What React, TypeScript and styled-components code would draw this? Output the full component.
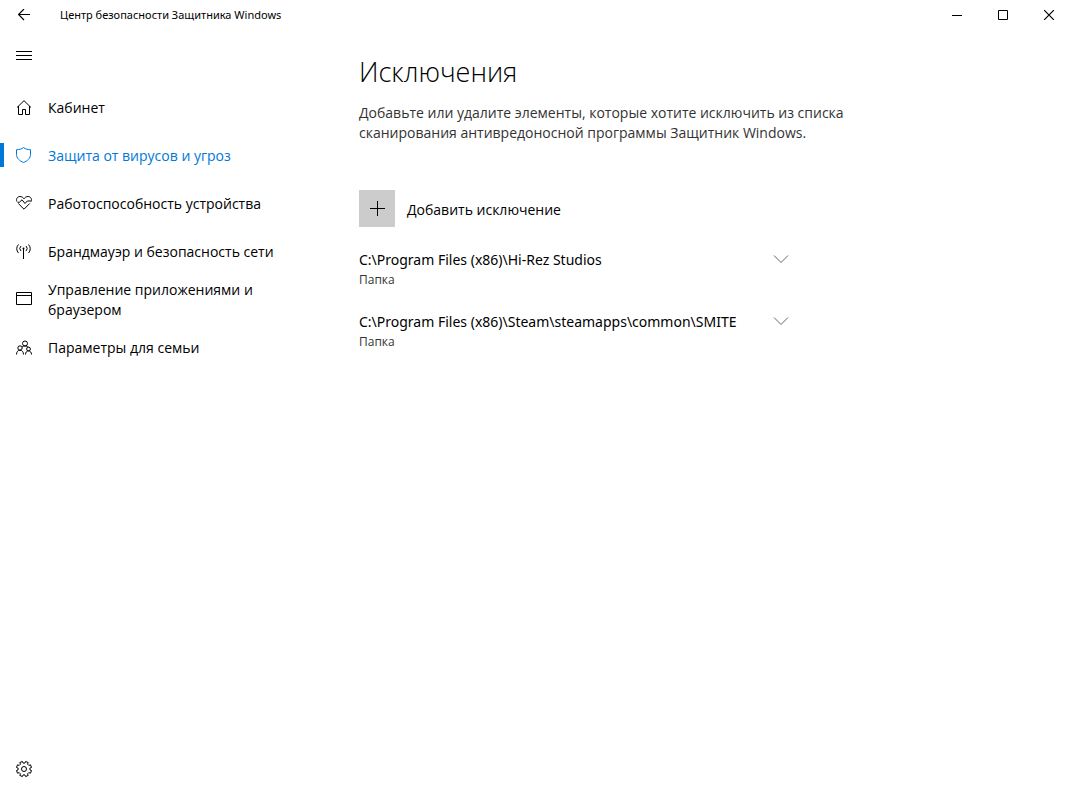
import React from "react";
import styled, { createGlobalStyle } from "styled-components";

const GlobalStyle = createGlobalStyle`
  *, *::before, *::after { box-sizing: border-box; }
  body {
    margin: 0;
    background: #fff;
    color: #000;
    font-family: "Open Sans", "Noto Sans", sans-serif;
    font-size: 14px;
    line-height: 20px;
  }
  button { font: inherit; color: inherit; background: none; border: 0; padding: 0; cursor: default; }
  h1, p, ul { margin: 0; padding: 0; }
  ul { list-style: none; }
  svg { display: block; flex: none; }
`;

const Window = styled.div`
  display: flex;
  flex-direction: column;
  min-height: 100vh;
`;

const TitleBar = styled.header`
  display: flex;
  align-items: center;
  height: 30px;
`;

const IconButton = styled.button<{ $height: number }>`
  display: flex;
  align-items: center;
  justify-content: center;
  width: 48px;
  height: ${(p) => p.$height}px;
`;

const WindowTitle = styled.span`
  flex: 1;
  padding-left: 12px;
  font-family: "Noto Sans", "Open Sans", sans-serif;
  font-size: 11px;
  line-height: 16px;
`;

const CaptionButton = styled(IconButton)`
  width: 46px;
`;

const Body = styled.div`
  display: flex;
  flex: 1;
`;

const Sidebar = styled.aside`
  display: flex;
  flex-direction: column;
  flex: none;
  width: 320px;
  padding: 2px 0 6px;
`;

const Nav = styled.nav`
  flex: 1;
  padding-top: 4px;
`;

const NavLink = styled.a<{ $active?: boolean }>`
  display: flex;
  align-items: center;
  height: 48px;
  padding-right: 40px;
  color: ${(p) => (p.$active ? "#0078d7" : "#000")};
  text-decoration: none;
`;

const NavLead = styled.span`
  display: flex;
  flex: none;
  align-items: center;
  width: 48px;
  padding-bottom: 2px;
`;

const Marker = styled.span<{ $active?: boolean }>`
  width: 4px;
  height: 24px;
  margin-right: 12px;
  background: ${(p) => (p.$active ? "#0078d7" : "transparent")};
`;

const Main = styled.main`
  flex: 1;
  padding: 24px 39px;
`;

const Heading = styled.h1`
  font-size: 27px;
  font-weight: 300;
  line-height: 36px;
`;

const Description = styled.p`
  max-width: 500px;
  padding-top: 13px;
  color: #333;
`;

const AddButton = styled.button`
  display: flex;
  align-items: center;
  gap: 12px;
  margin-top: 47px;
`;

const AddLabel = styled.span`
  padding-top: 2px;
`;

const PlusTile = styled.span`
  display: flex;
  align-items: center;
  justify-content: center;
  width: 36px;
  height: 37px;
  background: #ccc;
`;

const List = styled.ul`
  max-width: 430px;
  padding-top: 23px;
`;

const Item = styled.li`
  padding-bottom: 22px;
`;

const ItemButton = styled.button`
  display: flex;
  align-items: flex-start;
  justify-content: space-between;
  width: 100%;
  text-align: left;
`;

const ItemText = styled.span`
  display: flex;
  flex-direction: column;
`;

const ItemPath = styled.span`
  font-family: "Noto Sans", "Open Sans", sans-serif;
`;

const ItemKind = styled.span`
  color: #333;
  font-size: 12px;
`;

const svgProps = (w: number, h: number) => ({
  width: w,
  height: h,
  viewBox: `0 0 ${w} ${h}`,
  fill: "none",
  stroke: "currentColor",
  "aria-hidden": true,
});

const HomeIcon = () => (
  <svg {...svgProps(16, 16)}>
    <path d="M1 8.500 8 1.700l7 6.800M2.500 7.200v8.300h4v-5h3v5h4V7.200" />
  </svg>
);

const ShieldIcon = () => (
  <svg {...svgProps(16, 16)}>
    <path d="M7.500.6C5.500 2.100 3 2.700.5 2.700v4.500c0 4 3 6.700 7 8.300 4-1.600 7-4.300 7-8.300V2.700C12 2.700 9.500 2.100 7.500.6Z" />
  </svg>
);

const HeartIcon = () => (
  <svg {...svgProps(16, 16)}>
    <path d="M.8 6.500C-.2 3.500 1.700 1.500 4 1.500c1.800 0 3 .9 4 2.300 1-1.400 2.200-2.300 4-2.300 2.300 0 4.200 2 3.200 5M2.300 8.500 8 14.200l5.700-5.700M1.500 7.200H3.500L6 4.800l3 3.700 2.300-2.500H15" />
  </svg>
);

const AntennaIcon = () => (
  <svg {...svgProps(16, 16)}>
    <path d="M7.500 6v10M5 3a3.500 3.500 0 0 0 0 5M10 3a3.500 3.500 0 0 1 0 5M2.500 1.500a6 6 0 0 0 0 8.500M12.500 1.500a6 6 0 0 1 0 8.500" />
    <circle cx="7.500" cy="5.500" r="1" fill="currentColor" stroke="none" />
  </svg>
);

const BrowserIcon = () => (
  <svg {...svgProps(16, 16)}>
    <path d="M.5 1.500h15v12H.5zM.5 4.500h15" />
  </svg>
);

const FamilyIcon = () => (
  <svg {...svgProps(16, 16)}>
    <circle cx="9" cy="4.500" r="2.500" />
    <circle cx="4" cy="9" r="2.200" />
    <circle cx="12.500" cy="10" r="1.900" />
    <path d="M.5 15.500c0-2.600 1.400-4.300 3.500-4.300s3.500 1.700 3.500 4.300M9.500 15.500c0-2.100 1.200-3.600 3-3.600s3 1.500 3 3.600M6 8.200C6.800 7.300 7.800 7 9 7s2.700.5 3.200 1.300" />
  </svg>
);

const gearPath = (() => {
  const points: string[] = [];
  const teeth = 8;
  for (let i = 0; i < teeth; i++) {
    [
      [-0.3, 6],
      [-0.24, 7.7],
      [0.24, 7.7],
      [0.3, 6],
    ].forEach(([offset, radius]) => {
      const a = ((i + 0.5 + offset) * 2 * Math.PI) / teeth;
      points.push(`${(8 + radius * Math.cos(a)).toFixed(2)} ${(8 + radius * Math.sin(a)).toFixed(2)}`);
    });
  }
  return `M${points.join("L")}Z`;
})();

const GearIcon = () => (
  <svg {...svgProps(16, 16)}>
    <path d={gearPath} />
    <circle cx="8" cy="8" r="2.500" />
  </svg>
);

const navItems = [
  { label: "Кабинет", Icon: HomeIcon },
  { label: "Защита от вирусов и угроз", Icon: ShieldIcon, active: true },
  { label: "Работоспособность устройства", Icon: HeartIcon },
  { label: "Брандмауэр и безопасность сети", Icon: AntennaIcon },
  { label: "Управление приложениями и браузером", Icon: BrowserIcon },
  { label: "Параметры для семьи", Icon: FamilyIcon },
];

const exclusions = [
  "C:\\Program Files (x86)\\Hi-Rez Studios",
  "C:\\Program Files (x86)\\Steam\\steamapps\\common\\SMITE",
];

export default function App() {
  return (
    <Window>
      <GlobalStyle />
      <TitleBar>
        <IconButton $height={30} aria-label="Назад">
          <svg {...svgProps(12, 12)}>
            <path d="M.5 5.500H12M6 0 .5 5.500 6 11" strokeWidth="1.200" />
          </svg>
        </IconButton>
        <WindowTitle>Центр безопасности Защитника Windows</WindowTitle>
        <CaptionButton $height={30} aria-label="Свернуть">
          <svg {...svgProps(10, 10)}>
            <path d="M0 5.500h10" />
          </svg>
        </CaptionButton>
        <CaptionButton $height={30} aria-label="Развернуть">
          <svg {...svgProps(10, 10)}>
            <path d="M.5.5h9v9h-9z" />
          </svg>
        </CaptionButton>
        <CaptionButton $height={30} aria-label="Закрыть">
          <svg {...svgProps(10, 10)}>
            <path d="m0 0 10 10M10 0 0 10" strokeWidth="1.200" />
          </svg>
        </CaptionButton>
      </TitleBar>
      <Body>
        <Sidebar>
          <IconButton $height={48} aria-label="Меню">
            <svg {...svgProps(16, 10)}>
              <path d="M0 .5h16M0 4.500h16M0 8.500h16" />
            </svg>
          </IconButton>
          <Nav>
            {navItems.map(({ label, Icon, active }) => (
              <NavLink key={label} href="#" $active={active} aria-current={active ? "page" : undefined}>
                <NavLead>
                  <Marker $active={active} />
                  <Icon />
                </NavLead>
                <span>{label}</span>
              </NavLink>
            ))}
          </Nav>
          <IconButton $height={48} aria-label="Параметры">
            <GearIcon />
          </IconButton>
        </Sidebar>
        <Main>
          <Heading>Исключения</Heading>
          <Description>
            Добавьте или удалите элементы, которые хотите исключить из списка сканирования
            антивредоносной программы Защитник Windows.
          </Description>
          <AddButton>
            <PlusTile>
              <svg {...svgProps(15, 15)}>
                <path d="M0 7.500h15M7.500 0v15" />
              </svg>
            </PlusTile>
            <AddLabel>Добавить исключение</AddLabel>
          </AddButton>
          <List>
            {exclusions.map((path) => (
              <Item key={path}>
                <ItemButton aria-expanded="false">
                  <ItemText>
                    <ItemPath>{path}</ItemPath>
                    <ItemKind>Папка</ItemKind>
                  </ItemText>
                  <svg {...svgProps(16, 20)} stroke="#666">
                    <path d="m1 5.500 7 7 7-7" />
                  </svg>
                </ItemButton>
              </Item>
            ))}
          </List>
        </Main>
      </Body>
    </Window>
  );
}
